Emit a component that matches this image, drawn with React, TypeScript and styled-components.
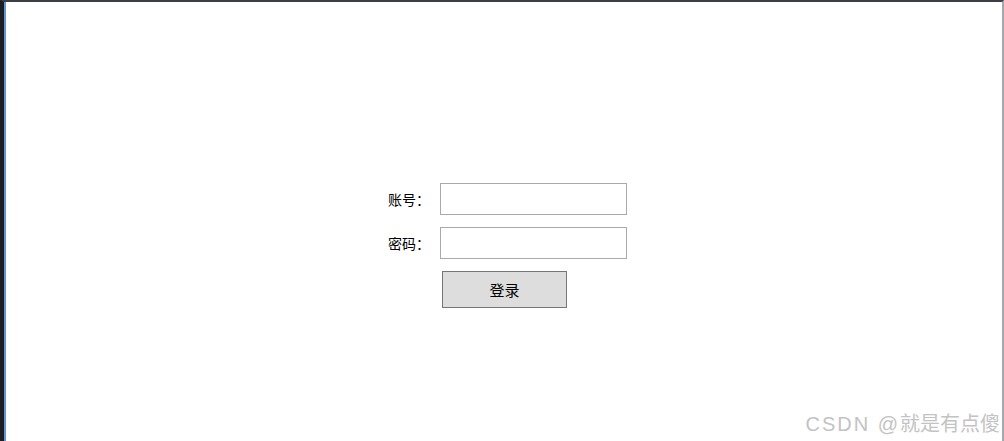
import React from "react";
import styled, { createGlobalStyle } from "styled-components";

const GlobalStyle = createGlobalStyle`
  html, body, #root {
    margin: 0;
    padding: 0;
    height: 100%;
  }
  body {
    font-family: "Noto Sans CJK SC", "Liberation Sans", sans-serif;
    background: #ffffff;
  }
`;

const Frame = styled.div`
  position: relative;
  height: 441px;
  box-sizing: border-box;
  border-top: 2px solid #3b3e42;
  border-left: 4px solid #1c1e21;
  border-right: 2px solid #a3a7ae;
  background: #ffffff;
  overflow: hidden;
`;

const Page = styled.div`
  height: 100%;
  border-left: 2px solid #6294dc;
  box-sizing: border-box;
  padding: 181px 0 0 382px;
`;

const LoginForm = styled.form`
  display: grid;
  grid-template-columns: auto 187px;
  column-gap: 10px;
  row-gap: 12px;
  align-items: center;
  width: max-content;
  margin: 0;
`;

const Label = styled.label`
  font-size: 14px;
  color: #000000;
  text-align: right;
  line-height: 20px;
`;

const Input = styled.input`
  width: 187px;
  height: 32px;
  box-sizing: border-box;
  border: 1px solid #a9a9a9;
  border-radius: 0;
  padding: 0 4px;
  font-size: 14px;
  outline: none;
  background: #ffffff;
`;

const SubmitButton = styled.button`
  grid-column: 2;
  justify-self: start;
  margin-left: 2px;
  width: 125px;
  height: 37px;
  box-sizing: border-box;
  background: #dddddd;
  border: 1px solid #767676;
  border-radius: 0;
  font-family: "Noto Sans CJK SC", sans-serif;
  font-size: 15px;
  color: #000000;
  padding: 0;
`;

const Watermark = styled.div`
  position: absolute;
  right: 2px;
  bottom: 5px;
  font-family: "Liberation Sans", "Noto Sans CJK SC", sans-serif;
  font-size: 20px;
  line-height: 24px;
  color: #c3c3c3;
  white-space: nowrap;
`;

const WatermarkSite = styled.span`
  letter-spacing: 2px;
`;

export default function App() {
  return (
    <>
      <GlobalStyle />
      <Frame>
        <Page>
          <LoginForm onSubmit={(e) => e.preventDefault()}>
            <Label htmlFor="account">账号：</Label>
            <Input id="account" type="text" />
            <Label htmlFor="password">密码：</Label>
            <Input id="password" type="password" />
            <SubmitButton type="submit">登录</SubmitButton>
          </LoginForm>
        </Page>
        <Watermark>
          <WatermarkSite>CSDN @</WatermarkSite>就是有点傻
        </Watermark>
      </Frame>
    </>
  );
}
